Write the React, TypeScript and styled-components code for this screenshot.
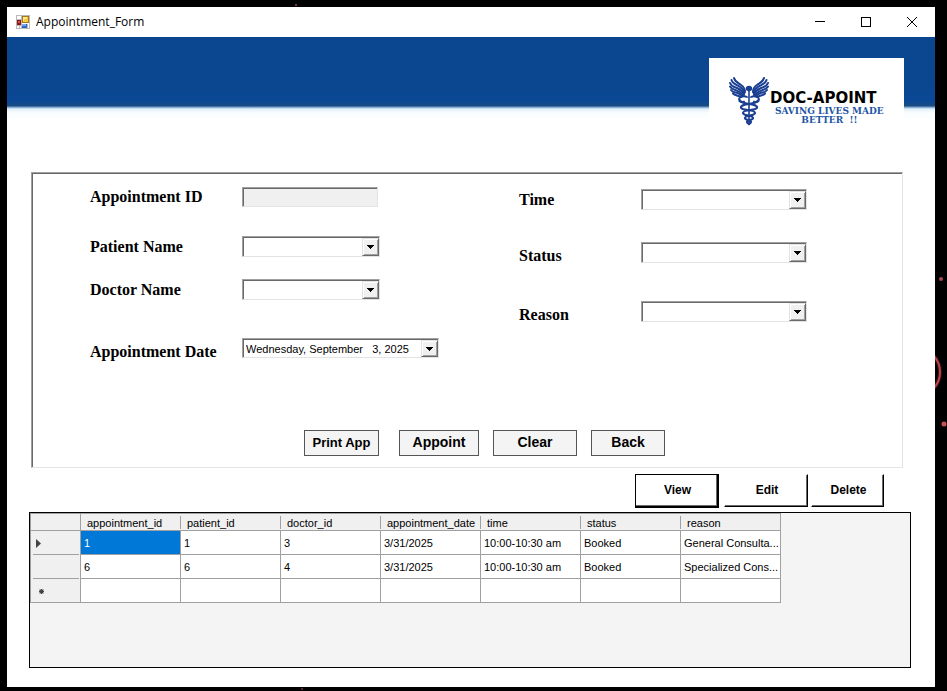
import React from "react";
import styled, { createGlobalStyle, css } from "styled-components";

const GlobalStyle = createGlobalStyle`
  * { box-sizing: border-box; }
  body { margin: 0; background: #000; color: #000; font-family: "Liberation Sans", Arial, sans-serif; }
  button, input, select { font: inherit; color: inherit; border-radius: 0; margin: 0; }
`;

const Desktop = styled.div`
  position: relative;
  display: flex;
  min-height: 100vh;
  padding: 7px 12px 4px 7px;
  background: #000;
  overflow: hidden;
`;

const Wallpaper = styled.svg<{ $side: "right" | "top" | "bottom" }>`
  position: absolute;
  ${(p) => p.$side === "right" && css`right: 0; top: 260px;`}
  ${(p) => p.$side === "top" && css`left: 290px; top: 0;`}
  ${(p) => p.$side === "bottom" && css`left: 296px; bottom: 0;`}
`;

const Window = styled.main`
  flex: 1;
  display: flex;
  flex-direction: column;
  min-width: 0;
  background: #fff;
`;

const TitleBar = styled.header`
  display: flex;
  align-items: center;
  height: 30px;
  padding-left: 9px;
`;

const Title = styled.h1`
  flex: 1;
  margin: 0 0 0 6px;
  font: 400 12px/16px "Open Sans", "Noto Sans", sans-serif;
`;

const CaptionButton = styled.button`
  display: grid;
  place-items: center;
  width: 46px;
  height: 30px;
  padding: 0;
  border: 0;
  background: transparent;
`;

const Banner = styled.div`
  display: flex;
  justify-content: flex-end;
  height: 135px;
  padding: 21px 31px 0 0;
  background: linear-gradient(
    #0a4790 0, #0a4790 54px, #0a4896 60px, #0a4896 64px, #1b4b80 69px,
    #6f9bcb 70px, #e2f1fa 72px, #fafeff 76px, #fff 84px
  );
`;

const LogoCard = styled.div`
  display: flex;
  align-items: flex-start;
  width: 195px;
  height: 80px;
  padding: 18px 0 0 19px;
  background: #fff;
`;

const Brand = styled.div`
  margin-top: 13px;
  white-space: nowrap;
`;

const BrandName = styled.div`
  font: 700 15px/18px "DejaVu Sans", sans-serif;
`;

const Tagline = styled.div`
  padding-left: 5px;
  font: 700 9px/9px "DejaVu Serif", serif;
  color: #1d56a5;
  text-align: center;
  white-space: pre;
`;

const FormPanel = styled.form`
  display: flex;
  flex-direction: column;
  justify-content: space-between;
  min-height: 296px;
  margin: 0 32px 0 24px;
  padding: 14px 95px 11px 57px;
  border: 1px solid #a0a0a0;
  border-right-color: #e3e3e3;
  border-bottom-color: #e3e3e3;
  box-shadow: inset 1px 1px #696969;
`;

const Columns = styled.div`
  display: flex;
  justify-content: space-between;
`;

const FieldList = styled.div<{ $side: "left" | "right" }>`
  display: flex;
  flex-direction: column;
  padding-top: ${(p) => (p.$side === "right" ? "2px" : "0")};
`;

const FieldRow = styled.div<{ $gap?: number; $low?: boolean; $labelWidth: number }>`
  display: grid;
  grid-template-columns: ${(p) => p.$labelWidth}px auto;
  min-height: ${(p) => (p.$low ? "23px" : "20px")};
  margin-top: ${(p) => p.$gap ?? 0}px;
  align-items: start;
  justify-content: start;

  > label {
    align-self: ${(p) => (p.$low ? "end" : "center")};
  }
`;

const Label = styled.label`
  padding-left: 1px;
  font: 700 16px/18px "Liberation Serif", "Times New Roman", serif;
`;

const sunken = css`
  border: 1px solid #a0a0a0;
  border-right-color: #e3e3e3;
  border-bottom-color: #e3e3e3;
  box-shadow: inset 1px 1px #696969;
`;

const raised = css`
  border: 1px solid #e3e3e3;
  border-right-color: #696969;
  border-bottom-color: #696969;
  box-shadow: inset 1px 1px #fff, inset -1px -1px #a0a0a0;
  background: #f0f0f0;
`;

const TextBox = styled.input`
  width: 136px;
  height: 20px;
  padding: 0 4px;
  background: #f0f0f0;
  ${sunken}
`;

const Combo = styled.div<{ $width: number }>`
  position: relative;
  display: flex;
  width: ${(p) => p.$width}px;
  height: 21px;
  background: #fff;
  ${sunken}
`;

const Select = styled.select`
  flex: 1;
  appearance: none;
  padding: 0 20px 0 4px;
  border: 0;
  background: transparent;
  font-size: 11px;
`;

const DropArrow = styled.span`
  position: absolute;
  top: 1px;
  right: 0;
  bottom: 0;
  display: grid;
  place-items: center;
  width: 17px;
  pointer-events: none;
  ${raised}
`;

const DateInput = styled.input`
  flex: 1;
  min-width: 0;
  padding: 2px 0 0 3px;
  border: 0;
  background: transparent;
  font-size: 11px;
  line-height: 16px;
`;

const DateBox = styled(Combo)`
  height: 20px;
`;

const DropButton = styled.button`
  display: grid;
  place-items: center;
  width: 17px;
  margin-top: 1px;
  padding: 0;
  ${raised}
`;

const FormButtons = styled.div`
  display: flex;
  justify-content: center;
  gap: 14px;
  padding-left: 73px;
`;

const FlatButton = styled.button<{ $width: number; $small?: boolean }>`
  width: ${(p) => p.$width}px;
  height: 26px;
  margin-right: ${(p) => (p.$small ? "6px" : "0")};
  padding: 0 0 2px;
  border: 1px solid #555;
  background: #f4f4f4;
  font-size: ${(p) => (p.$small ? "13px" : "14px")};
  font-weight: 700;
`;

const RecordActions = styled.div`
  display: flex;
  justify-content: flex-end;
  gap: 3px;
  height: 44px;
  padding: 6px 51px 0 0;
`;

const RecordButton = styled.button<{ $width: number; $focused?: boolean }>`
  width: ${(p) => p.$width}px;
  height: ${(p) => (p.$focused ? "34px" : "33px")};
  padding: 0 0 1px 2px;
  border: 1px solid #fff;
  border-right-color: #000;
  border-bottom-color: #000;
  background: #fff;
  box-shadow: inset -1px -1px #696969;
  font-size: 12px;
  font-weight: 700;
  ${(p) =>
    p.$focused &&
    css`
      border: 1px solid #000;
      border-right-width: 2px;
      border-bottom-width: 2px;
      margin-right: 2px;
    `}
`;

const GridFrame = styled.section`
  flex: 1;
  margin: 0 24px 19px 22px;
  border: 1px solid #000;
  background: #f4f4f4;
`;

const Table = styled.table`
  width: 751px;
  table-layout: fixed;
  border-collapse: separate;
  border-spacing: 0;
  border-top: 1px solid #a0a0a0;
  border-left: 1px solid #a0a0a0;
  font-size: 11px;
  line-height: 14px;

  col:first-child { width: 50px; }
`;

const HeadCell = styled.th<{ $solid?: boolean }>`
  height: 17px;
  padding: 1px 0 0 6px;
  border-bottom: 1px solid #a0a0a0;
  background: ${(p) =>
      p.$solid
        ? "linear-gradient(#a0a0a0, #a0a0a0) right / 1px 100%"
        : "linear-gradient(#a0a0a0, #a0a0a0) right bottom 1px / 1px 13px"}
    no-repeat #f0f0f0;
  font-weight: 400;
  text-align: left;
`;

const RowHead = styled.th<{ $last?: boolean }>`
  height: 24px;
  padding: 0 0 0 5px;
  border-right: 1px solid #a0a0a0;
  background: linear-gradient(#a0a0a0, #a0a0a0) left ${(p) => (p.$last ? "0" : "2px")} bottom /
    ${(p) => (p.$last ? "100%" : "46px")} 1px no-repeat #f0f0f0;
  text-align: left;

  svg { display: block; }
`;

const Cell = styled.td<{ $selected?: boolean }>`
  height: 24px;
  padding: 0 0 0 3px;
  border-right: 1px solid #a0a0a0;
  border-bottom: 1px solid #a0a0a0;
  background: ${(p) => (p.$selected ? "#0078d7" : "#fff")};
  color: ${(p) => (p.$selected ? "#fff" : "#000")};
  white-space: nowrap;
  overflow: hidden;
`;

const Arrow = () => (
  <svg width="7" height="4" viewBox="0 0 7 4" shapeRendering="crispEdges" aria-hidden="true">
    <path d="M0 0h7v1H0zM1 1h5v1H1zM2 2h3v1H2zM3 3h1v1H3z" />
  </svg>
);

const AppIcon = () => (
  <svg width="14" height="14" viewBox="0 0 14 14" shapeRendering="crispEdges" aria-hidden="true">
    <path fill="#fff" stroke="#b9b9b9" d="M.5.5h13v13H.5z" />
    <path stroke="#b9b9b9" d="M5.5 0v14M0 4.5h5M3 11v3M0 10.5h6M11.500 9v5" />
    <path fill="#8d1714" d="M1 5h4v5H1z" />
    <path fill="#d2544c" d="M2 6h2v2H2z" />
    <path fill="#a77a16" d="M6 1h7v7H6z" />
    <path fill="#f6c93c" d="M7 2h5v5H7z" />
    <path fill="#ffe991" d="M7 2h4v2H8v2H7z" />
    <path fill="#3565c4" d="M6 9h5v4H6z" />
    <path fill="#76a7f3" d="M6 9h4v2H6z" />
  </svg>
);

const Caduceus = () => (
  <svg width="42" height="50" viewBox="0 0 42 50" fill="none" stroke="#1b3f91" strokeLinecap="round" aria-hidden="true">
    {[false, true].map((flip) => (
      <g key={String(flip)} transform={flip ? "translate(42 0) scale(-1 1)" : undefined}>
        <g strokeWidth="2">
          <path d="M6 2c1 4 4 5 7 7 3 2 4 4 4 7" />
          <path d="M3.500 4c1 4 5 4.500 8 6.500 3 2 4.500 4 5 6.500" />
          <path d="M2 7c1.500 4 5 4 8 5.500s5 3.500 6 6" />
          <path d="M2 10.500c2 3.500 4.500 3 7.500 4.300s4.500 2.700 6 4.700" />
          <path d="M3 14c2 2.800 4 2.200 6.500 3 2 .6 3.500 1.500 5 3.300" />
          <path d="M5 17.500c2 2.200 4 1.600 8 3.500" />
        </g>
        <path strokeWidth="1.800" d="M19 21c-3-1.500-8-.5-8 2.500 0 2.500 3 3 5 2" />
      </g>
    ))}
    <ellipse cx="21" cy="12.500" rx="3.200" ry="2.700" fill="#1b3f91" stroke="none" />
    <path strokeWidth="1.600" d="M21 15v33" />
    <g strokeWidth="2.200">
      <path d="M12 24.500c2 4.500 17 2.500 17 7 0 3.500-14 1.500-14 5.500 0 3 10 2 10 5 0 2.500-6 1.500-6 4 0 1 1 1.500 2 2" />
      <path d="M30 24.500c-2 4.500-17 2.500-17 7 0 3.500 14 1.500 14 5.500 0 3-10 2-10 5 0 2.500 6 1.500 6 4 0 1-1 1.500-2 2" />
    </g>
  </svg>
);

type FieldProps = { id: string; label: string; labelWidth: number; gap?: number; low?: boolean; children: React.ReactNode };
const Field = ({ id, label, labelWidth, gap, low, children }: FieldProps) => (
  <FieldRow $gap={gap} $low={low} $labelWidth={labelWidth}>
    <Label htmlFor={id}>{label}</Label>
    {children}
  </FieldRow>
);

const Dropdown = ({ id, width }: { id: string; width: number }) => (
  <Combo $width={width}>
    <Select id={id} defaultValue="">
      <option value="" />
    </Select>
    <DropArrow><Arrow /></DropArrow>
  </Combo>
);

const columns = ["appointment_id", "patient_id", "doctor_id", "appointment_date", "time", "status", "reason"];
const rows = [
  ["1", "1", "3", "3/31/2025", "10:00-10:30 am", "Booked", "General Consulta..."],
  ["6", "6", "4", "3/31/2025", "10:00-10:30 am", "Booked", "Specialized Cons..."],
];

export default function App() {
  return (
    <Desktop>
      <GlobalStyle />
      <Wallpaper $side="right" width="12" height="180" fill="none" aria-hidden="true">
        <circle cx="6" cy="19" r="2" fill="#b04750" />
        <circle cx="-19" cy="112" r="24" stroke="#3c1114" strokeWidth="4" />
        <circle cx="-19" cy="112" r="24" stroke="#b9484d" strokeWidth="2" />
        <circle cx="9" cy="164" r="2.500" fill="#cb5056" />
      </Wallpaper>
      <Wallpaper $side="top" width="12" height="7" aria-hidden="true">
        <circle cx="6" cy="5" r="1" fill="#a0484f" />
      </Wallpaper>
      <Wallpaper $side="bottom" width="12" height="4" aria-hidden="true">
        <circle cx="6" cy="2" r="1" fill="#6d3338" />
      </Wallpaper>

      <Window>
        <TitleBar>
          <AppIcon />
          <Title>Appointment_Form</Title>
          <CaptionButton aria-label="Minimize">
            <svg width="10" height="10" stroke="#000" shapeRendering="crispEdges"><path d="M0 4.500h10" /></svg>
          </CaptionButton>
          <CaptionButton aria-label="Maximize">
            <svg width="10" height="10" stroke="#000" fill="none" shapeRendering="crispEdges"><path d="M.5.5h9v9h-9z" /></svg>
          </CaptionButton>
          <CaptionButton aria-label="Close">
            <svg width="10" height="10" stroke="#000"><path d="M0 0l10 10M10 0L0 10" /></svg>
          </CaptionButton>
        </TitleBar>

        <Banner>
          <LogoCard>
            <Caduceus />
            <Brand>
              <BrandName>DOC-APOINT</BrandName>
              <Tagline>{"SAVING LIVES MADE\nBETTER  !!"}</Tagline>
            </Brand>
          </LogoCard>
        </Banner>

        <FormPanel onSubmit={(e) => e.preventDefault()}>
          <Columns>
            <FieldList $side="left">
              <Field id="appointment-id" label="Appointment ID" labelWidth={153}>
                <TextBox id="appointment-id" readOnly />
              </Field>
              <Field id="patient" label="Patient Name" labelWidth={153} gap={29}>
                <Dropdown id="patient" width={138} />
              </Field>
              <Field id="doctor" label="Doctor Name" labelWidth={153} gap={22}>
                <Dropdown id="doctor" width={138} />
              </Field>
              <Field id="date" label="Appointment Date" labelWidth={153} gap={38} low>
                <DateBox $width={197}>
                  <DateInput id="date" defaultValue="Wednesday, September   3, 2025" />
                  <DropButton type="button" aria-label="Open calendar"><Arrow /></DropButton>
                </DateBox>
              </Field>
            </FieldList>
            <FieldList $side="right">
              <Field id="time" label="Time" labelWidth={123}>
                <Dropdown id="time" width={166} />
              </Field>
              <Field id="status" label="Status" labelWidth={123} gap={32} low>
                <Dropdown id="status" width={166} />
              </Field>
              <Field id="reason" label="Reason" labelWidth={123} gap={36} low>
                <Dropdown id="reason" width={166} />
              </Field>
            </FieldList>
          </Columns>
          <FormButtons>
            <FlatButton type="button" $width={75} $small>Print App</FlatButton>
            <FlatButton type="button" $width={80}>Appoint</FlatButton>
            <FlatButton type="button" $width={84}>Clear</FlatButton>
            <FlatButton type="button" $width={74}>Back</FlatButton>
          </FormButtons>
        </FormPanel>

        <RecordActions>
          <RecordButton $width={84} $focused>View</RecordButton>
          <RecordButton $width={84}>Edit</RecordButton>
          <RecordButton $width={73}>Delete</RecordButton>
        </RecordActions>

        <GridFrame>
          <Table>
            <colgroup>
              <col />
              {columns.map((c) => <col key={c} />)}
            </colgroup>
            <thead>
              <tr>
                <HeadCell $solid aria-label="Row" />
                {columns.map((c, i) => (
                  <HeadCell key={c} scope="col" $solid={i === columns.length - 1}>{c}</HeadCell>
                ))}
              </tr>
            </thead>
            <tbody>
              {rows.map((row, r) => (
                <tr key={r}>
                  <RowHead scope="row">
                    {r === 0 && <svg width="5" height="9" fill="#444"><path d="M0 0l5 4.500L0 9z" /></svg>}
                  </RowHead>
                  {row.map((value, c) => (
                    <Cell key={c} $selected={r === 0 && c === 0}>{value}</Cell>
                  ))}
                </tr>
              ))}
              <tr>
                <RowHead scope="row" $last>
                  <svg width="10" height="7" stroke="#444">
                    <circle cx="5.500" cy="3.500" r="1.800" fill="#444" />
                    <path d="M5.500 1v5M3 3.500h5M3.700 1.700l3.600 3.600M7.300 1.700L3.700 5.300" />
                  </svg>
                </RowHead>
                {columns.map((c) => <Cell key={c} />)}
              </tr>
            </tbody>
          </Table>
        </GridFrame>
      </Window>
    </Desktop>
  );
}
